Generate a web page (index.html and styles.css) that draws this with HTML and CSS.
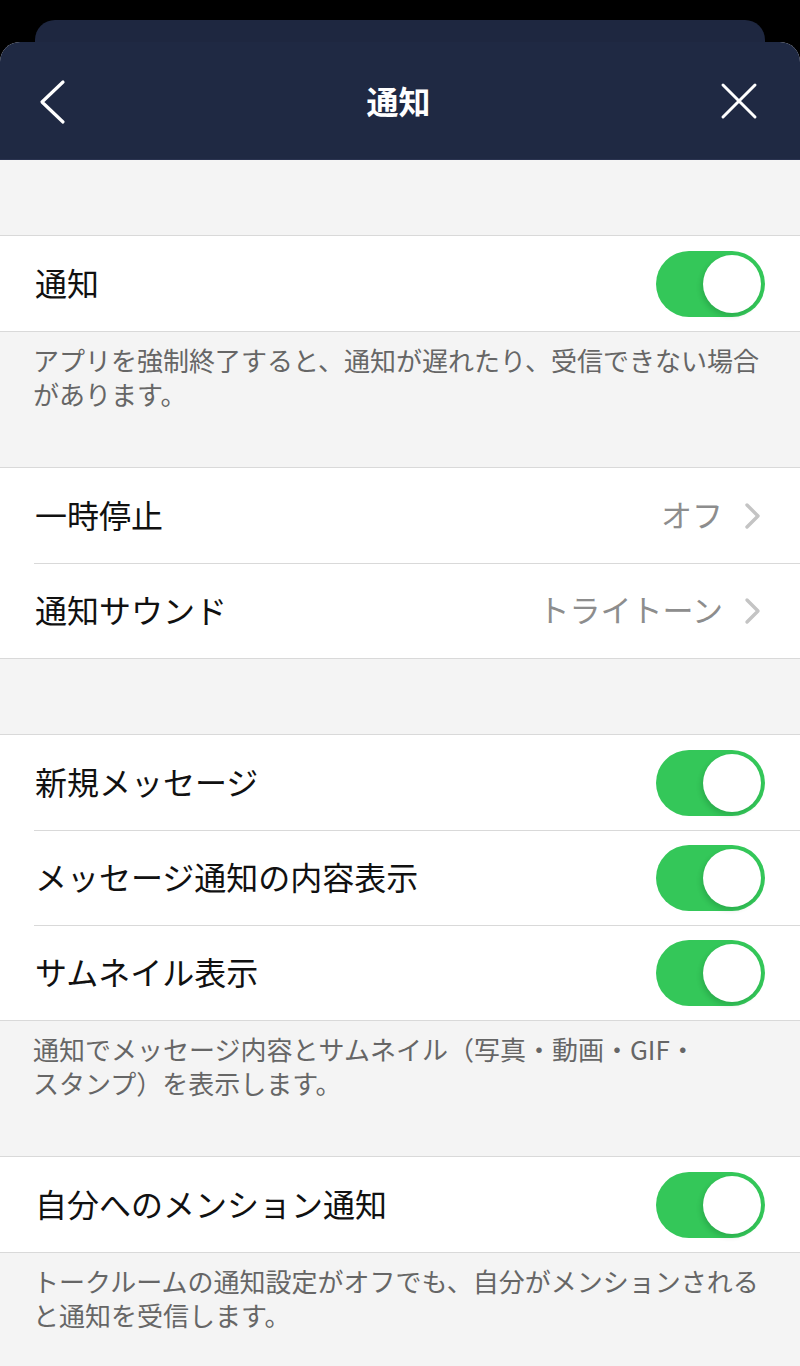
FILE: index.html
```html
<!DOCTYPE html>
<html lang="ja">
<head>
<meta charset="utf-8">
<title>通知</title>
<link rel="stylesheet" href="styles.css">
</head>
<body>
<div class="back-card"></div>
<div class="sheet">
  <header class="header">
    <svg class="icon-back" width="30" height="50" viewBox="0 0 30 50" aria-hidden="true">
      <polyline points="25,5 4,25 25,45" fill="none" stroke="#fff" stroke-width="3.2" stroke-linecap="round" stroke-linejoin="round"/>
    </svg>
    <h1 class="title">通知</h1>
    <svg class="icon-close" width="40" height="40" viewBox="0 0 40 40" aria-hidden="true">
      <path d="M4 4 L36 36 M36 4 L4 36" fill="none" stroke="#fff" stroke-width="3" stroke-linecap="round"/>
    </svg>
  </header>

  <main class="content">
    <div class="gap"></div>
    <section class="group">
      <div class="row">
        <span class="label">通知</span>
        <span class="toggle"></span>
      </div>
    </section>
    <p class="note"><span class="line">アプリを強制終了すると、通知が遅れたり、受信できない場合</span><span class="line">があります。</span></p>

    <section class="group">
      <div class="row">
        <span class="label">一時停止</span>
        <span class="value">オフ</span>
        <svg class="chev" width="20" height="28" viewBox="0 0 20 28" aria-hidden="true"><polyline points="4,3 15,14 4,25" fill="none" stroke="#c4c4c4" stroke-width="3.4" stroke-linecap="round" stroke-linejoin="round"/></svg>
      </div>
      <div class="row">
        <span class="label">通知サウンド</span>
        <span class="value">トライトーン</span>
        <svg class="chev" width="20" height="28" viewBox="0 0 20 28" aria-hidden="true"><polyline points="4,3 15,14 4,25" fill="none" stroke="#c4c4c4" stroke-width="3.4" stroke-linecap="round" stroke-linejoin="round"/></svg>
      </div>
    </section>
    <div class="gap"></div>

    <section class="group">
      <div class="row">
        <span class="label">新規メッセージ</span>
        <span class="toggle"></span>
      </div>
      <div class="row">
        <span class="label">メッセージ通知の内容表示</span>
        <span class="toggle"></span>
      </div>
      <div class="row">
        <span class="label">サムネイル表示</span>
        <span class="toggle"></span>
      </div>
    </section>
    <p class="note"><span class="line">通知でメッセージ内容とサムネイル（写真・動画・GIF・</span><span class="line">スタンプ）を表示します。</span></p>

    <section class="group">
      <div class="row">
        <span class="label">自分へのメンション通知</span>
        <span class="toggle"></span>
      </div>
    </section>
    <p class="note"><span class="line">トークルームの通知設定がオフでも、自分がメンションされる</span><span class="line">と通知を受信します。</span></p>
  </main>
</div>
</body>
</html>
```

FILE: styles.css
```css
* { box-sizing: border-box; }

html, body {
  margin: 0;
  padding: 0;
}

body {
  background: #000;
  width: 800px;
  min-height: 1366px;
  padding-top: 20px;
  font-family: "Noto Sans CJK JP", "Noto Sans", sans-serif;
  display: flex;
  flex-direction: column;
}

.back-card {
  height: 22px;
  margin: 0 35px;
  background: #1e2740;
  border-radius: 20px 20px 0 0;
}

.sheet {
  flex: 1;
  display: flex;
  flex-direction: column;
  border-radius: 20px 20px 0 0;
  overflow: hidden;
  background: #f4f4f4;
}

.header {
  height: 118px;
  background: #1f2943;
  display: grid;
  grid-template-columns: 1fr auto 1fr;
  align-items: center;
  padding: 0 41px 0 38px;
  border-bottom: 1px solid #2a3350;
}

.icon-back { display: block; margin-top: 2px; justify-self: start; }
.icon-close { display: block; justify-self: end; }

.title {
  margin: 0 0 2px;
  color: #fff;
  font-size: 32px;
  font-weight: 700;
  line-height: 1;
}

.content {
  flex: 1;
  background: #f4f4f4;
}

.gap { height: 75px; }

.group {
  background: #fff;
  border-top: 1px solid #d9d9d9;
  border-bottom: 1px solid #d9d9d9;
}

.row {
  height: 95px;
  display: flex;
  align-items: center;
  padding: 0 35px;
  position: relative;
}

.row + .row::before {
  content: "";
  position: absolute;
  left: 34px;
  right: 0;
  top: 0;
  height: 1px;
  background: #d9d9d9;
}

.label {
  flex: 1;
  font-size: 32px;
  color: #111;
  line-height: 1;
  white-space: nowrap;
  margin-bottom: 4px;
}

.value {
  font-size: 31px;
  color: #8d8d8d;
  line-height: 1;
  white-space: nowrap;
  margin-right: 20px;
  margin-bottom: 4px;
}

.chev { display: block; margin-right: 2px; }

.toggle {
  position: relative;
  width: 109px;
  height: 66px;
  border-radius: 33px;
  background: #34c759;
  flex: none;
}

.toggle::after {
  content: "";
  position: absolute;
  right: 4px;
  top: 4px;
  width: 58px;
  height: 58px;
  border-radius: 50%;
  background: #fff;
  box-shadow: -2px 3px 5px rgba(0, 60, 20, 0.18);
}

.note {
  margin: 0;
  padding: 11px 33px 56px;
  font-size: 26px;
  line-height: 34px;
  color: #666;
}

.note .line {
  display: block;
  white-space: nowrap;
}
```
